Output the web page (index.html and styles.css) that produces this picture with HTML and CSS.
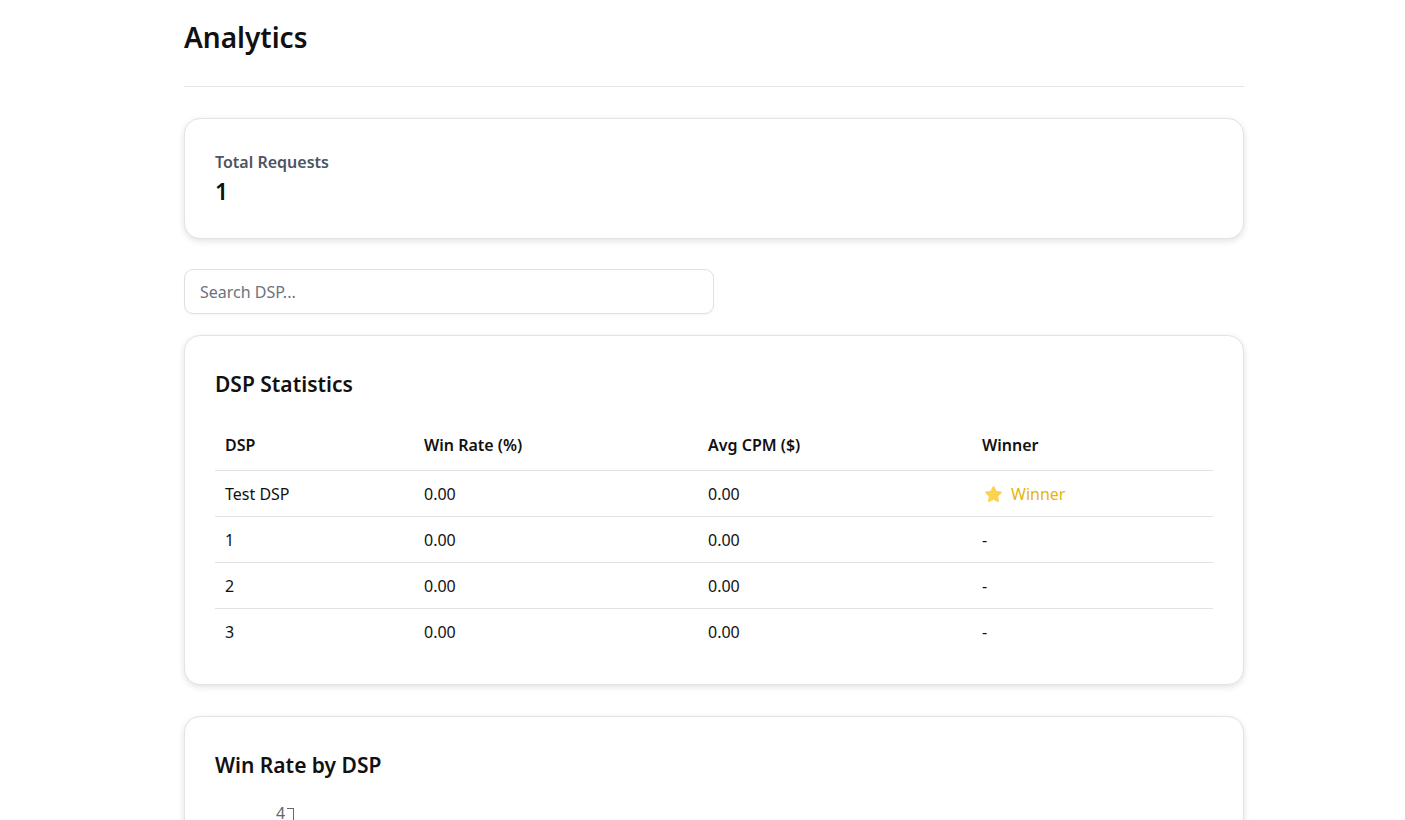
FILE: index.html
```html
<!DOCTYPE html>
<html>
<head>
<meta charset="utf-8">
<link rel="stylesheet" href="styles.css">
</head>
<body>
<div class="page">
  <h1 class="title">Analytics</h1>
  <div class="divider"></div>

  <div class="card stat-card">
    <div class="stat-label">Total Requests</div>
    <div class="stat-value">1</div>
  </div>

  <input class="search" type="text" placeholder="Search DSP...">

  <div class="card">
    <h2 class="card-title">DSP Statistics</h2>
    <table class="table">
      <thead>
        <tr><th class="c1">DSP</th><th class="c2">Win Rate (%)</th><th class="c3">Avg CPM ($)</th><th class="c4">Winner</th></tr>
      </thead>
      <tbody>
        <tr><td>Test DSP</td><td>0.00</td><td>0.00</td><td><span class="winner"><svg class="star" viewBox="0 0 24 24" width="19" height="19"><path d="M12 2.5l2.9 5.9 6.5.9-4.7 4.6 1.1 6.5L12 17.3l-5.8 3.1 1.1-6.5-4.7-4.6 6.5-.9z" fill="#fcd34d" stroke="#fcd34d" stroke-width="2.2" stroke-linejoin="round"/></svg>Winner</span></td></tr>
        <tr><td>1</td><td>0.00</td><td>0.00</td><td>-</td></tr>
        <tr><td>2</td><td>0.00</td><td>0.00</td><td>-</td></tr>
        <tr><td>3</td><td>0.00</td><td>0.00</td><td>-</td></tr>
      </tbody>
    </table>
  </div>

  <div class="card chart-card">
    <h2 class="card-title">Win Rate by DSP</h2>
    <div class="chart">
      <div class="tick"><span class="tick-label">4</span><span class="tick-line"></span></div>
    </div>
  </div>
</div>
</body>
</html>
```

FILE: styles.css
```css
* { box-sizing: border-box; }
body {
  margin: 0;
  font-family: "Noto Sans", "Open Sans", sans-serif;
  color: #111;
  background: #fff;
}
.page {
  width: 1060px;
  margin-left: 184px;
  padding-top: 17px;
}
.title {
  margin: 0;
  font-size: 28px;
  font-weight: 600;
  line-height: 40px;
}
.divider {
  height: 1px;
  background: #e5e5e5;
  margin-top: 29px;
  margin-bottom: 31px;
}
.card {
  border: 1px solid #e3e3e3;
  border-radius: 16px;
  box-shadow: 0 2px 6px rgba(0,0,0,0.12);
  background: #fff;
  padding: 30px 30px;
}
.stat-card {
  padding: 32px 30px 30px;
  height: 121px;
}
.stat-label {
  font-size: 16px;
  font-weight: 600;
  color: #4b5563;
  line-height: 22px;
}
.stat-value {
  font-size: 23px;
  font-weight: 600;
  line-height: 30px;
  margin-top: 3px;
}
.search {
  display: block;
  margin: 30px 0 21px;
  width: 530px;
  height: 45px;
  border: 1px solid #e0e0e0;
  border-radius: 9px;
  padding: 0 15px;
  font-family: inherit;
  font-size: 16px;
  color: #111;
  box-shadow: 0 1px 2px rgba(0,0,0,0.04);
  outline: none;
}
.search::placeholder { color: #6b7280; }
.card-title {
  margin: 0;
  font-size: 21px;
  font-weight: 600;
  line-height: 36px;
}
.table {
  width: 100%;
  border-collapse: collapse;
  margin-top: 20px;
  font-size: 16px;
}
.table th {
  text-align: left;
  font-weight: 600;
  padding: 0 10px 2px;
  height: 48px;
  border-bottom: 1px solid #e2e2e2;
}
.table td {
  padding: 2px 10px 0;
  height: 46px;
  border-bottom: 1px solid #e2e2e2;
}
.table tbody tr:last-child td { border-bottom: none; }
.c1 { width: 199px; }
.c2 { width: 284px; }
.c3 { width: 274px; }
.winner {
  color: #eab308;
  display: flex;
  align-items: center;
  gap: 8px;
  margin-left: 2px;
}
.star { display: block; }
.card + .card { margin-top: 31px; }
.chart-card { height: 200px; }
.chart {
  margin-top: 22px;
  padding-left: 61px;
}
.tick {
  display: flex;
  align-items: flex-start;
  gap: 2px;
  color: #666;
  font-size: 16px;
  line-height: 16px;
}
.tick-line {
  width: 7px;
  height: 14px;
  border-top: 1px solid #666;
  border-right: 1px solid #666;
  margin-top: 3px;
}
```
